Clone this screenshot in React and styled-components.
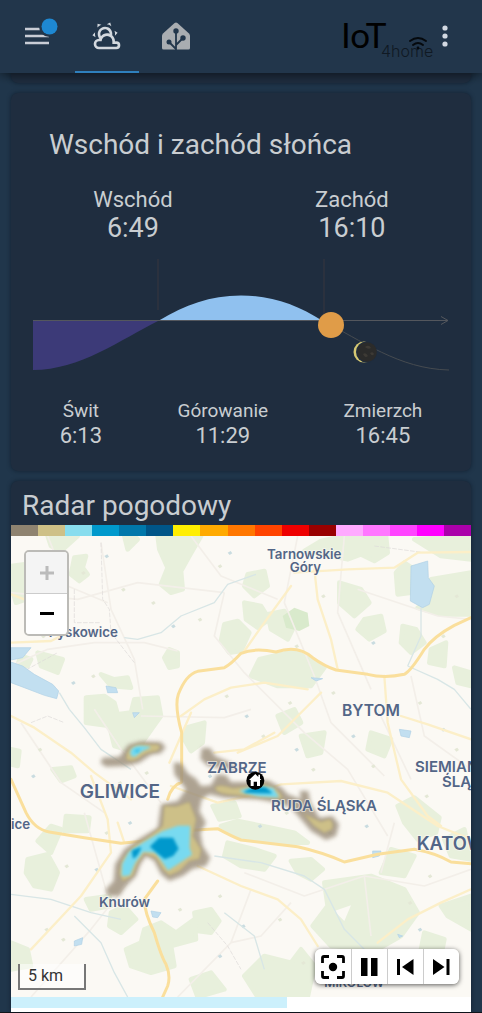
import React, { useState } from 'react';
import styled, { createGlobalStyle } from 'styled-components';

const GlobalStyle = createGlobalStyle`
    * {
        box-sizing: border-box;
    }
    body {
        margin: 0;
        background-color: #20364b;
        color: #c9cdd1;
        font-family: Roboto, "Noto Sans", sans-serif;
    }
    button {
        padding: 0;
        border: 0;
        font-family: inherit;
        cursor: pointer;
    }
    svg {
        display: block;
    }
`;

//header
const Header = styled.header`
    position: sticky;
    top: 0;
    z-index: 5;
    display: flex;
    align-items: stretch;
    height: 73px;
    padding: 0 29px 0 6px;
    background-color: #22364b;
    box-shadow: 0 2px 10px rgba(0, 0, 0, 0.55);
`;

const MenuButton = styled.button`
    display: grid;
    place-items: center;
    width: 64px;
    background: none;
`;

const Tabs = styled.nav`
    display: flex;
    flex: 1;
    gap: 5px;
    margin-left: 5px;
`;

const Tab = styled.a`
    display: grid;
    place-items: center;
    width: 64px;
    color: ${(props) => (props.$active ? '#d3d8de' : '#a9adb1')};
    border-bottom: 2px solid ${(props) => (props.$active ? '#2f80bd' : 'transparent')};
`;

const Logo = styled.svg`
    align-self: center;
    width: 96px;
    height: 48px;
`;

const MoreButton = styled.button`
    display: grid;
    place-items: center;
    width: 16px;
    background: none;
`;

//cards
const Main = styled.main`
    display: flex;
    flex-direction: column;
    gap: 10px;
    padding: 0 11px;
    border-bottom: 1px solid #11151b;
`;

const Card = styled.section`
    overflow: hidden;
    background-color: #1f2d3f;
    border-radius: 7px;
    box-shadow: 0 0 4px rgba(8, 18, 30, 0.6);
`;

const CardEnd = styled(Card)`
    height: 10px;
    border-radius: 0 0 7px 7px;
`;

const SunCard = styled(Card)`
    padding: 35px 11px 22px;
`;

const SunTitle = styled.h2`
    margin: 0 0 24px;
    padding-left: 27px;
    font-size: 28px;
    line-height: 34px;
    font-weight: 400;
`;

const Times = styled.dl`
    display: flex;
    justify-content: space-around;
    margin: 0;
    text-align: center;
`;

const Time = styled.div`
    dt {
        font-size: ${(props) => (props.$small ? 19 : 22)}px;
        line-height: ${(props) => (props.$small ? 24 : 28)}px;
    }
    dd {
        margin: 0;
        font-size: ${(props) => (props.$small ? 22 : 27)}px;
        line-height: ${(props) => (props.$small ? 26 : 28)}px;
    }
`;

const SunChart = styled.svg`
    width: 100%;
    height: auto;
    padding: 0 11px;
    margin: 8px 0 19px;
`;

//radar
const RadarCard = styled(Card)`
    border-radius: 7px 7px 0 0;
`;

const RadarTitle = styled.h2`
    margin: 0;
    padding: 8px 11px 2px;
    font-size: 28px;
    line-height: 34px;
    font-weight: 400;
`;

const Scale = styled.div`
    display: flex;
    height: 11px;
`;

const Swatch = styled.span`
    flex: 1;
    background-color: ${(props) => props.$color};
`;

const MapBox = styled.div`
    position: relative;
    background-color: #fbf9f4;
`;

const MapSvg = styled.svg`
    width: 100%;
    height: auto;
    text {
        font-family: Inter, "Open Sans", sans-serif;
        font-weight: 600;
        fill: #536687;
        stroke: #fbf9f4;
        stroke-width: 6px;
        stroke-linejoin: round;
        stroke-opacity: 0.6;
        paint-order: stroke;
    }
`;

const ZoomBar = styled.div`
    position: absolute;
    top: 14px;
    left: 13px;
    overflow: hidden;
    border: 2px solid #bcbbb7;
    border-radius: 5px;
`;

const ZoomButton = styled.button`
    display: grid;
    place-items: center;
    width: 41px;
    height: 40px;
    color: #000;
    background-color: #fff;
    &:disabled {
        height: 42px;
        color: #bbb;
        background-color: #f4f4f4;
        border-bottom: 1px solid #ccc;
    }
`;

const Distance = styled.div`
    position: absolute;
    left: 7px;
    bottom: 7px;
    width: 68px;
    padding: 0 8px;
    color: #333;
    font-size: 16px;
    line-height: 24px;
    background-color: rgba(255, 255, 255, 0.5);
    border: 2px solid #777;
    border-top: 0;
`;

const Controls = styled.div`
    position: absolute;
    right: 12px;
    bottom: 13px;
    display: flex;
    overflow: hidden;
    border-radius: 6px;
    box-shadow: 0 1px 5px rgba(0, 0, 0, 0.65);
`;

const ControlButton = styled.button`
    display: grid;
    place-items: center;
    width: 36px;
    height: 35px;
    color: #000;
    background-color: #fff;
    & + & {
        border-left: 1px solid #ccc;
    }
`;

const Progress = styled.div`
    height: 15px;
    background-color: #fff;
`;

const ProgressBar = styled.div`
    height: 11px;
    background-color: #ccf0fc;
`;

const scaleColors = [
    '#8f8370', '#cec087', '#88ddee', '#0099cc', '#0077aa', '#005588',
    '#ffee00', '#ffaa00', '#ff7700', '#ff4400', '#ee0000', '#990000',
    '#ffaaff', '#ff77ff', '#ff44ff', '#ff00ff', '#aa00aa',
];

const sunTimes = [
    { name: 'Wschód', time: '6:49' },
    { name: 'Zachód', time: '16:10' },
];

const dayTimes = [
    { name: 'Świt', time: '6:13' },
    { name: 'Górowanie', time: '11:29' },
    { name: 'Zmierzch', time: '16:45' },
];

const cities = [
    { name: 'Tarnowskie', x: 768, y: 69, size: 40 },
    { name: 'Góry', x: 836, y: 109, size: 40 },
    { name: 'Pyskowice', x: 113, y: 303, size: 40 },
    { name: 'BYTOM', x: 993, y: 541, size: 47 },
    { name: 'ZABRZE', x: 589, y: 711, size: 45 },
    { name: 'GLIWICE', x: 206, y: 786, size: 57 },
    { name: 'SIEMIANOWICE', x: 1212, y: 708, size: 45 },
    { name: 'ŚLĄSKIE', x: 1293, y: 754, size: 45 },
    { name: 'RUDA ŚLĄSKA', x: 780, y: 824, size: 45 },
    { name: 'ice', x: 0, y: 880, size: 40 },
    { name: 'KATOWICE', x: 1217, y: 942, size: 55 },
    { name: 'Knurów', x: 264, y: 1112, size: 41 },
    { name: 'MIKOŁÓW', x: 940, y: 1352, size: 36 },
];

const forests = [
    'M440,0 H570 L535,60 L510,105 L515,160 L480,170 L450,145 L470,95 L445,40Z',
    'M110,0 H200 L150,45 L120,30Z M0,90 L40,85 L45,190 L15,200 L0,150Z',
    'M190,65 L225,60 L215,95 L230,115 L205,135 L180,115Z',
    'M1000,0 H1125 L1130,50 L1090,75 L1050,55 L1010,70 L880,45 L930,15Z M1210,10 L1380,0 V70 L1290,60Z',
    'M1180,80 L1210,100 L1200,170 L1160,175 L1155,110Z M1260,130 L1380,110 V235 L1290,235 L1220,215 L1265,190Z',
    'M640,265 L680,255 L715,290 L690,345 L655,350 L630,315Z',
    'M700,200 L750,210 L775,250 L740,275 L705,250Z M770,235 L820,225 L850,270 L830,310 L780,280Z',
    'M710,115 L760,105 L770,150 L730,180 L700,150Z M745,370 L850,345 L940,395 L900,450 L800,450 L720,420Z',
    'M985,140 L1050,160 L1075,200 L1030,240 L985,200Z M1060,250 L1110,240 L1120,285 L1075,310 L1040,280Z',
    'M225,485 L280,480 L310,500 L320,535 L360,530 L370,490 L440,485 L450,540 L400,610 L380,650 L310,630 L295,570 L225,560Z',
    'M525,575 L580,560 L575,620 L540,645 L520,610Z M270,415 L310,430 L350,425 L360,455 L300,450Z',
    'M1175,270 L1215,280 L1240,320 L1200,350 L1170,320Z M1260,340 L1305,320 L1300,390 L1255,380Z M1330,395 L1380,410 V450 L1340,440Z',
    'M125,700 L180,695 L190,720 L150,735Z M165,840 L235,845 L230,885 L160,885Z M0,640 L25,645 L20,690 L0,685Z',
    'M605,810 L670,800 L685,840 L625,850Z M630,870 L680,855 L780,875 L850,890 L890,920 L790,920 L690,905Z',
    'M1160,810 L1210,785 L1285,845 L1275,890 L1220,910 L1180,860Z M1300,910 L1360,880 L1380,970 L1320,960Z',
    'M800,540 L850,520 L870,560 L820,590Z M870,600 L940,590 L930,650 L890,660Z M1080,590 L1140,610 L1120,660 L1070,640Z',
    'M650,920 L730,940 L790,960 L760,1000 L690,990 L640,960Z M840,975 L900,970 L935,1000 L900,1030 L860,1010Z',
    'M940,1040 L1080,1020 L1180,1060 L1220,1130 L1170,1200 L1100,1240 L960,1230 L905,1170 L950,1110Z',
    'M1140,940 L1210,960 L1180,1020 L1110,1010Z M1290,1110 L1380,1080 V1180 L1310,1140Z M1240,1190 L1300,1210 L1290,1260 L1230,1240Z',
    'M50,970 L110,955 L140,1010 L120,1060 L70,1050 L45,1010Z M80,915 L120,870 L150,880 L120,950Z',
    'M550,1130 L600,1120 L625,1155 L600,1190 L560,1185Z M225,1090 L295,1080 L300,1110 L240,1120Z',
    'M400,1180 L450,1160 L495,1190 L550,1150 L555,1210 L480,1230 L490,1290 L420,1310 L360,1290 L345,1240 L390,1220Z',
    'M300,1130 L340,1110 L375,1150 L330,1190 L295,1170Z M0,1220 L50,1240 L60,1290 L0,1300Z M540,1330 L600,1310 L640,1360 L560,1383Z',
    'M760,1260 L840,1280 L870,1240 L910,1290 L890,1383 H740 L700,1320Z M30,360 L60,370 L50,390 L20,385Z M80,350 L155,370 L140,410 L90,390Z',
    'M475,340 L500,350 L500,390 L475,395 L460,365Z M350,40 L380,10 L370,0 H340Z',
];

const minorRoads = [
    'M0,170 L200,190 L380,140 L640,170 M270,20 L300,220 L370,370 L395,520',
    'M0,390 L110,340 L250,320 L400,320 L500,345 M110,0 L170,150 L290,200',
    'M640,170 L610,300 L700,410 L880,590 L1010,700 L1130,900',
    'M250,520 L330,640 L450,800 M30,560 L150,740 L280,830 M390,540 L640,545 L720,520',
    'M860,0 L820,200 L910,420 L960,560 L1120,720 M1000,0 L980,230 L1080,460',
    'M700,1010 L880,1080 L1060,1020 L1240,1050 L1380,1000 M1060,1020 L1080,1200',
    'M60,1383 L240,1180 L350,1040 M500,1383 L660,1220 L720,1060 M840,1100 L750,1200 L660,1220',
    'M1200,420 L1240,600 L1380,700 M1100,520 L1200,730 M1150,860 L1110,1010',
    'M540,0 L630,120 L800,190 M1040,160 L1280,240 L1380,250 M220,830 L290,1080',
];

//yellow roads of the map, thin ones first
const localRoads = [
    'M0,540 L70,575 L180,650 L250,710 L360,790',
    'M60,1240 L210,1080 L300,950 L290,850 L240,720 M0,320 L120,315 L170,290',
    'M320,860 L340,920 M840,150 L760,260 L700,345 M910,100 L920,190 L960,310 L980,400',
    'M850,110 L1010,100 L1150,95 L1220,50 L1380,48',
    'M510,540 L580,490 L660,455 L760,440 L890,460 M680,650 L800,600 L890,510 L930,470',
    'M1120,420 L1130,560 L1170,730 L1250,840 L1290,870 M1170,540 L1250,565 L1380,610',
    'M610,650 L700,640 L790,590 M480,750 L620,800 L710,780 L810,745 L990,735 L1130,770 L1280,870 L1380,910',
    'M560,990 L690,1050 L800,1090 L870,1150 L920,1230 M1100,1220 L1190,1150 L1290,1100 L1380,1060',
    'M540,530 L475,680 M0,175 L40,190',
];

const streams = [
    'M735,115 L650,145 L610,200 L510,240 L450,290 L380,310 L340,305',
    'M145,470 L175,520 L220,575 L270,640 L360,700',
    'M0,1075 L120,1090 L240,1130 L330,1150 M190,1140 L270,1220 L310,1310 L350,1383',
    'M610,960 L750,980 L880,1020 L940,1060 L1000,1180 L1100,1280',
    'M1190,390 L1280,430 L1330,460 L1380,520 M1230,210 L1230,300 L1190,390',
    'M640,1130 L730,1200 L760,1300',
];

const ponds = [
    'M285,450 L315,455 L320,470 L290,470Z',
    'M420,1125 L450,1130 L440,1145 L425,1143Z',
    'M190,1215 L215,1205 L212,1225 L190,1230Z',
    'M1085,945 L1110,945 L1105,960 L1085,965Z',
    'M1165,580 L1200,585 L1195,605 L1170,600Z',
    'M900,425 L935,428 L915,435Z',
    'M1160,1195 L1175,1200 L1165,1205Z',
    'M365,530 L385,530 L370,545Z',
];

const buildingDots = [
    [60, 155], [90, 300], [210, 110], [280, 60], [330, 160], [420, 200], [480, 270], [560, 250],
    [620, 90], [650, 50], [850, 330], [930, 180], [1080, 320], [1290, 300], [1330, 180], [180, 440],
    [240, 420], [80, 640], [60, 720], [320, 740], [400, 710], [350, 860], [280, 890], [640, 480],
    [700, 540], [750, 600], [830, 500], [850, 640], [900, 700], [960, 470], [1020, 600], [1080, 690],
    [1220, 500], [1290, 580], [1330, 640], [1240, 780], [1060, 870], [950, 890], [820, 830], [740, 870],
    [100, 1180], [150, 1210], [250, 1000], [500, 1120], [620, 1080], [690, 1170], [800, 1150], [870, 1280],
    [620, 1260], [1250, 1020], [1190, 1100], [1220, 1180], [1330, 1330], [160, 990], [590, 720], [680, 700],
];

const WeatherIcon = () => (
    <svg width="32" height="32" viewBox="0 0 24 24" fill="currentColor">
        <path d="M12.74,5.47C15.1,6.5 16.35,9.03 15.92,11.46C17.19,12.56 18,14.19 18,16V16.17C18.31,16.06 18.65,16 19,16A3,3 0 0,1 22,19A3,3 0 0,1 19,22H6A4,4 0 0,1 2,18A4,4 0 0,1 6,14H6.27C5,12.45 4.6,10.24 5.5,8.26C6.72,5.5 9.97,4.24 12.74,5.47M11.93,7.3C10.16,6.5 8.09,7.31 7.31,9.07C6.85,10.09 6.93,11.22 7.41,12.13C8.5,10.83 10.16,10 12,10C12.7,10 13.38,10.12 14,10.34C13.94,9.06 13.18,7.86 11.93,7.3M13.55,3.64C13,3.4 12.45,3.23 11.88,3.12L14.37,1.82L15.27,4.71C14.76,4.29 14.19,3.93 13.55,3.64M6.09,4.44C5.6,4.79 5.17,5.19 4.8,5.63L4.91,2.82L7.87,3.5C7.25,3.71 6.65,4.03 6.09,4.44M18,9.71C17.91,9.12 17.78,8.55 17.59,8L19.97,9.5L17.92,11.73C18.03,11.08 18.05,10.4 18,9.71M3.04,11.3C3.11,11.9 3.24,12.47 3.43,13L1.06,11.5L3.1,9.28C3,9.93 2.97,10.61 3.04,11.3M19,18H16V16A4,4 0 0,0 12,12A4,4 0 0,0 8,16H6A2,2 0 0,0 4,18A2,2 0 0,0 6,20H19A1,1 0 0,0 20,19A1,1 0 0,0 19,18Z" />
    </svg>
);

const HomeIcon = () => (
    <svg width="32" height="32" viewBox="0 0 32 32">
        <path d="M14.600,3 Q16,1.800 17.400,3 L29,13.500 Q30,14.500 30,16 V28 Q30,29.500 28.500,29.500 H3.500 Q2,29.500 2,28 V16 Q2,14.500 3,13.500Z" fill="currentColor" />
        <g stroke="#22364b" strokeWidth="1.800" fill="none">
            <path d="M16,11 V30 M16,29 L9,22 M16,25 L23,18" />
        </g>
        <g fill="#22364b">
            <circle cx="16" cy="11" r="2.700" />
            <circle cx="9" cy="22" r="2.500" />
            <circle cx="23" cy="18" r="2.700" />
        </g>
    </svg>
);

const RadarMap = () => (
    <MapSvg viewBox="0 0 1380 1383" role="img" aria-label="Radar pogodowy">
        <defs>
            <filter id="soft" x="-20%" y="-20%" width="140%" height="140%">
                <feGaussianBlur stdDeviation="7" />
            </filter>
            <filter id="softer" x="-20%" y="-20%" width="140%" height="140%">
                <feGaussianBlur stdDeviation="4" />
            </filter>
        </defs>
        <rect width="1380" height="1383" fill="#fbf9f4" />
        <g fill="#e8f0dc" stroke="#e8f0dc" strokeWidth="14" strokeLinejoin="round">
            {forests.map((d, i) => <path key={i} d={d} />)}
        </g>
        <g fill="#d9eacc">
            <path d="M815,240 L850,215 L890,230 L895,270 L865,285 L825,275Z" />
        </g>
        <path d="M970,1125 L1020,1108 L1000,1155Z" fill="#fbf9f4" />
        <g fill="none" stroke="#f3efe9" strokeWidth="5" strokeLinejoin="round">
            {minorRoads.map((d, i) => <path key={i} d={d} />)}
        </g>
        <path
            d="M270,20 L275,190 L295,220 L300,290 L370,380 M190,160 V260 H270 M30,410 L140,350 M1090,30 L1240,50 M590,1160 L650,1230 L690,1300 M60,560 L110,540 L160,560"
            fill="none" stroke="#dcdad8" strokeWidth="2" strokeDasharray="14 4"
        />
        <g>
            {buildingDots.map(([x, y], i) => (
                <path key={i} d={`M${x},${y} l9,-5 l5,7 l-8,5z`} fill={i % 3 === 0 ? '#c9dce0' : '#e4e8d6'} />
            ))}
        </g>
        <g fill="none" stroke="#d8e6e6" strokeWidth="4" strokeLinejoin="round">
            {streams.map((d, i) => <path key={i} d={d} />)}
        </g>
        <g fill="#c2dff0" stroke="#afd0e5" strokeWidth="2">
            <path d="M0,335 L60,335 L35,365 L0,372Z M0,378 L35,390 L70,415 L125,445 L143,465 L137,488 L100,478 L40,455 L0,440Z" />
            <path d="M1200,90 L1250,75 L1252,125 L1270,150 L1255,205 L1235,215 L1198,195Z" />
            {ponds.map((d, i) => <path key={i} d={d} />)}
        </g>
        <g fill="none" stroke="#fcefc8" strokeWidth="7" strokeLinecap="round" strokeLinejoin="round">
            {localRoads.map((d, i) => <path key={i} d={d} />)}
        </g>
        <g fill="none" stroke="#fadf9c" strokeWidth="9" strokeLinecap="round" strokeLinejoin="round">
            <path d="M0,730 L45,830 Q70,880 115,888 L220,905 L330,922 L400,915 L500,885 L620,878 Q660,900 690,912 L860,932 Q940,950 1000,978 L1100,955 L1210,940 Q1270,950 1320,978 L1380,983" />
            <path d="M470,790 Q480,750 512,738 V590 Q490,510 502,475 Q525,415 560,406 L640,395 Q660,385 690,352 Q730,335 795,348 Q860,325 905,365 Q940,390 975,402 L1070,415 Q1120,428 1180,415 Q1200,405 1240,340 Q1270,300 1330,268 L1380,245" />
            <path d="M440,1035 L400,1090 Q400,1130 430,1190 Q450,1260 465,1285 Q480,1320 470,1350 L455,1383" />
        </g>

        {/* rain cells, from light to heavy */}
        <g fill="#9c8f7c" opacity="0.82" filter="url(#soft)">
            <path d="M275,665 L325,662 L352,626 L390,616 L450,618 L464,634 L450,652 L420,656 L385,680 L345,690 L285,692 L268,680Z" />
            <path d="M572,636 L598,636 L612,660 L645,674 L680,690 L660,702 L590,690 L568,668Z" />
            <path d="M488,680 L510,680 L530,712 L555,728 L570,750 L600,748 L618,715 L645,718 L660,738 L715,738 L770,732 L812,755 L830,775 L870,790 L866,765 L892,765 L898,800 L925,845 L965,840 L984,865 L975,900 L945,912 L900,885 L870,850 L840,815 L800,800 L740,790 L640,785 L595,775 L572,790 L565,825 L585,860 L568,890 L575,930 L598,965 L585,990 L545,998 L515,1020 L475,1035 L450,1015 L430,975 L405,960 L388,985 L375,1020 L345,1050 L325,1080 L290,1080 L284,1060 L308,1035 L312,985 L340,940 L385,908 L440,875 L450,805 L500,795 L525,760 L490,715Z" />
        </g>
        <g fill="#cdc088" stroke="#b2a36d" strokeWidth="2" filter="url(#softer)">
            <path d="M346,660 Q355,625 395,625 L440,626 Q455,636 435,645 Q400,650 385,666 Q360,680 346,670Z" />
            <path d="M612,755 Q625,742 665,757 L760,746 Q805,755 815,787 L740,783 L650,775 Q615,770 612,755Z" />
            <path d="M460,810 L495,812 L535,798 L555,850 L545,900 L570,940 L565,968 L535,975 L505,1005 L475,1018 L455,1000 L435,965 L400,952 L380,980 L365,1020 L335,1035 L325,1010 L335,970 L365,932 L410,905 L455,870Z" />
            <path d="M880,835 L930,858 L955,850 Q970,860 962,880 L940,890 L910,870Z" />
        </g>
        <g fill="#78daf0" stroke="#78daf0" strokeWidth="5" strokeLinejoin="round" filter="url(#softer)">
            <path d="M360,650 Q365,630 390,632 L415,634 Q385,645 375,658 Q362,664 360,650Z" />
            <path d="M690,765 L735,753 L785,758 L800,782 L740,778Z" />
            <path d="M455,888 L500,872 L535,872 L533,935 L540,955 L495,985 L472,1000 L455,975 L435,948 L395,945 L370,980 L355,1015 L335,1018 L336,985 L355,950 L400,920Z" />
        </g>
        <g fill="#0498cc" stroke="#0498cc" strokeWidth="5" strokeLinejoin="round" filter="url(#softer)">
            <path d="M420,932 L445,908 L485,908 L500,938 L485,958 L462,967 L440,950Z M365,945 L388,936 L378,955 L368,965Z" />
            <path d="M702,768 L730,755 L762,756 L780,770Z" />
        </g>
        <path d="M368,645 L388,637 L380,650Z" fill="#31c0e6" filter="url(#softer)" />

        {cities.map((city) => (
            <text key={city.name} x={city.x} y={city.y} fontSize={city.size}>{city.name}</text>
        ))}

        <circle cx="733" cy="734" r="27" fill="#000" />
        <path d="M733,714 L751,732 H747 V750 H738 V737 H728 V750 H719 V732 H714Z M742,716 H747 V728 L742,723Z" fill="#fff" />
    </MapSvg>
);

const App = () => {
    const [playing, setPlaying] = useState(true);

    return (
        <>
            <GlobalStyle />
            <Header>
                <MenuButton aria-label="Menu">
                    <svg width="42" height="40" viewBox="0 0 42 40">
                        <path d="M8,12 H32 M8,19 H32 M8,26 H32" stroke="#c9cdd6" strokeWidth="2.600" />
                        <circle cx="32.500" cy="9.500" r="10.500" fill="#22364b" />
                        <circle cx="32.500" cy="9.500" r="8" fill="#1e88d2" />
                    </svg>
                </MenuButton>
                <Tabs>
                    <Tab href="#pogoda" aria-label="Pogoda" $active><WeatherIcon /></Tab>
                    <Tab href="#dom" aria-label="Dom"><HomeIcon /></Tab>
                </Tabs>
                <Logo viewBox="0 0 96 48" aria-label="IoT 4home">
                    <text x="0" y="35" fontFamily="Lato, sans-serif" fontSize="35" fill="#000">IoT</text>
                    <text x="40" y="44" fontFamily="Inter, sans-serif" fontSize="16" fontWeight="300" fill="#101923">4home</text>
                    <g fill="none" stroke="#05090d" strokeWidth="2" strokeLinecap="round">
                        <path d="M69,28 Q77,22 85,28 M72,32 Q77,28 82,32" />
                    </g>
                    <circle cx="77" cy="35" r="1.400" fill="#05090d" />
                </Logo>
                <MoreButton aria-label="Więcej">
                    <svg width="8" height="24" viewBox="0 0 8 24" fill="#d3d9e2">
                        <circle cx="4" cy="3" r="2.600" />
                        <circle cx="4" cy="11" r="2.600" />
                        <circle cx="4" cy="19" r="2.600" />
                    </svg>
                </MoreButton>
            </Header>

            <Main>
                <CardEnd />

                <SunCard>
                    <SunTitle>Wschód i zachód słońca</SunTitle>
                    <Times>
                        {sunTimes.map((item) => (
                            <Time key={item.name}>
                                <dt>{item.name}</dt>
                                <dd>{item.time}</dd>
                            </Time>
                        ))}
                    </Times>
                    <SunChart viewBox="0 0 416 130">
                        <path d="M125,9 V60 M291,9 V70" stroke="#38363f" strokeWidth="1" />
                        <path d="M0,70.500 H126 C87,90 47,120 0,120Z" fill="#3c3a78" />
                        <path d="M126,70.500 C152,55 177,45.500 208,45.500 C239,45.500 264,55 289,70.500Z" fill="#90c1ef" />
                        <path d="M289,70.500 C328,90 366,119 416,120" fill="none" stroke="#464b50" strokeWidth="1" />
                        <path d="M0,70.500 H415 M408,66.500 L415,70.500 L408,74.500" fill="none" stroke="#54575d" strokeWidth="1" />
                        <circle cx="298" cy="75" r="13" fill="#e09c48" />
                        <circle cx="331" cy="102" r="10.500" fill="#d5c873" />
                        <circle cx="333.500" cy="102" r="10.500" fill="#1f2d3f" />
                        <circle cx="334" cy="102" r="9.800" fill="#2b2b2a" />
                        <path d="M332,97 q4,-3 6,1 q-3,2 -6,-1 M330,104 q3,-2 5,2 q-3,3 -5,-2 M337,103 q3,-2 4,1 q-2,3 -4,-1" fill="#3d3a35" />
                    </SunChart>
                    <Times>
                        {dayTimes.map((item) => (
                            <Time key={item.name} $small>
                                <dt>{item.name}</dt>
                                <dd>{item.time}</dd>
                            </Time>
                        ))}
                    </Times>
                </SunCard>

                <RadarCard>
                    <RadarTitle>Radar pogodowy</RadarTitle>
                    <Scale>
                        {scaleColors.map((color) => <Swatch key={color} $color={color} />)}
                    </Scale>
                    <MapBox>
                        <RadarMap />
                        <ZoomBar>
                            <ZoomButton aria-label="Przybliż" disabled>
                                <svg width="14" height="14" viewBox="0 0 14 14" stroke="currentColor" strokeWidth="3">
                                    <path d="M0,7 H14 M7,0 V14" />
                                </svg>
                            </ZoomButton>
                            <ZoomButton aria-label="Oddal">
                                <svg width="14" height="14" viewBox="0 0 14 14" stroke="currentColor" strokeWidth="3">
                                    <path d="M0,6.500 H14" />
                                </svg>
                            </ZoomButton>
                        </ZoomBar>
                        <Distance>5 km</Distance>
                        <Controls>
                            <ControlButton aria-label="Wyśrodkuj">
                                <svg width="24" height="24" viewBox="0 0 24 24">
                                    <path d="M1.500,8 V3 Q1.500,1.500 3,1.500 H8 M16,1.500 H21 Q22.500,1.500 22.500,3 V8 M22.500,16 V21 Q22.500,22.500 21,22.500 H16 M8,22.500 H3 Q1.500,22.500 1.500,21 V16" fill="none" stroke="#000" strokeWidth="2.800" />
                                    <circle cx="12" cy="12" r="4.200" />
                                </svg>
                            </ControlButton>
                            <ControlButton aria-label={playing ? 'Pauza' : 'Start'} onClick={() => setPlaying(!playing)}>
                                <svg width="24" height="24" viewBox="0 0 24 24">
                                    {playing ? <path d="M3,3 H9.500 V21 H3Z M13,3 H19.500 V21 H13Z" /> : <path d="M5,3 L20,12 L5,21Z" />}
                                </svg>
                            </ControlButton>
                            <ControlButton aria-label="Poprzednia">
                                <svg width="24" height="24" viewBox="0 0 24 24">
                                    <path d="M3,4 H6 V20 H3Z M19.500,4 V20 L8,12Z" />
                                </svg>
                            </ControlButton>
                            <ControlButton aria-label="Następna">
                                <svg width="24" height="24" viewBox="0 0 24 24">
                                    <path d="M3,4 V20 L14.500,12Z M16.500,4 H19.500 V20 H16.500Z" />
                                </svg>
                            </ControlButton>
                        </Controls>
                    </MapBox>
                    <Progress>
                        <ProgressBar style={{ width: '60%' }} />
                    </Progress>
                </RadarCard>
            </Main>
        </>
    );
};

export default App;
